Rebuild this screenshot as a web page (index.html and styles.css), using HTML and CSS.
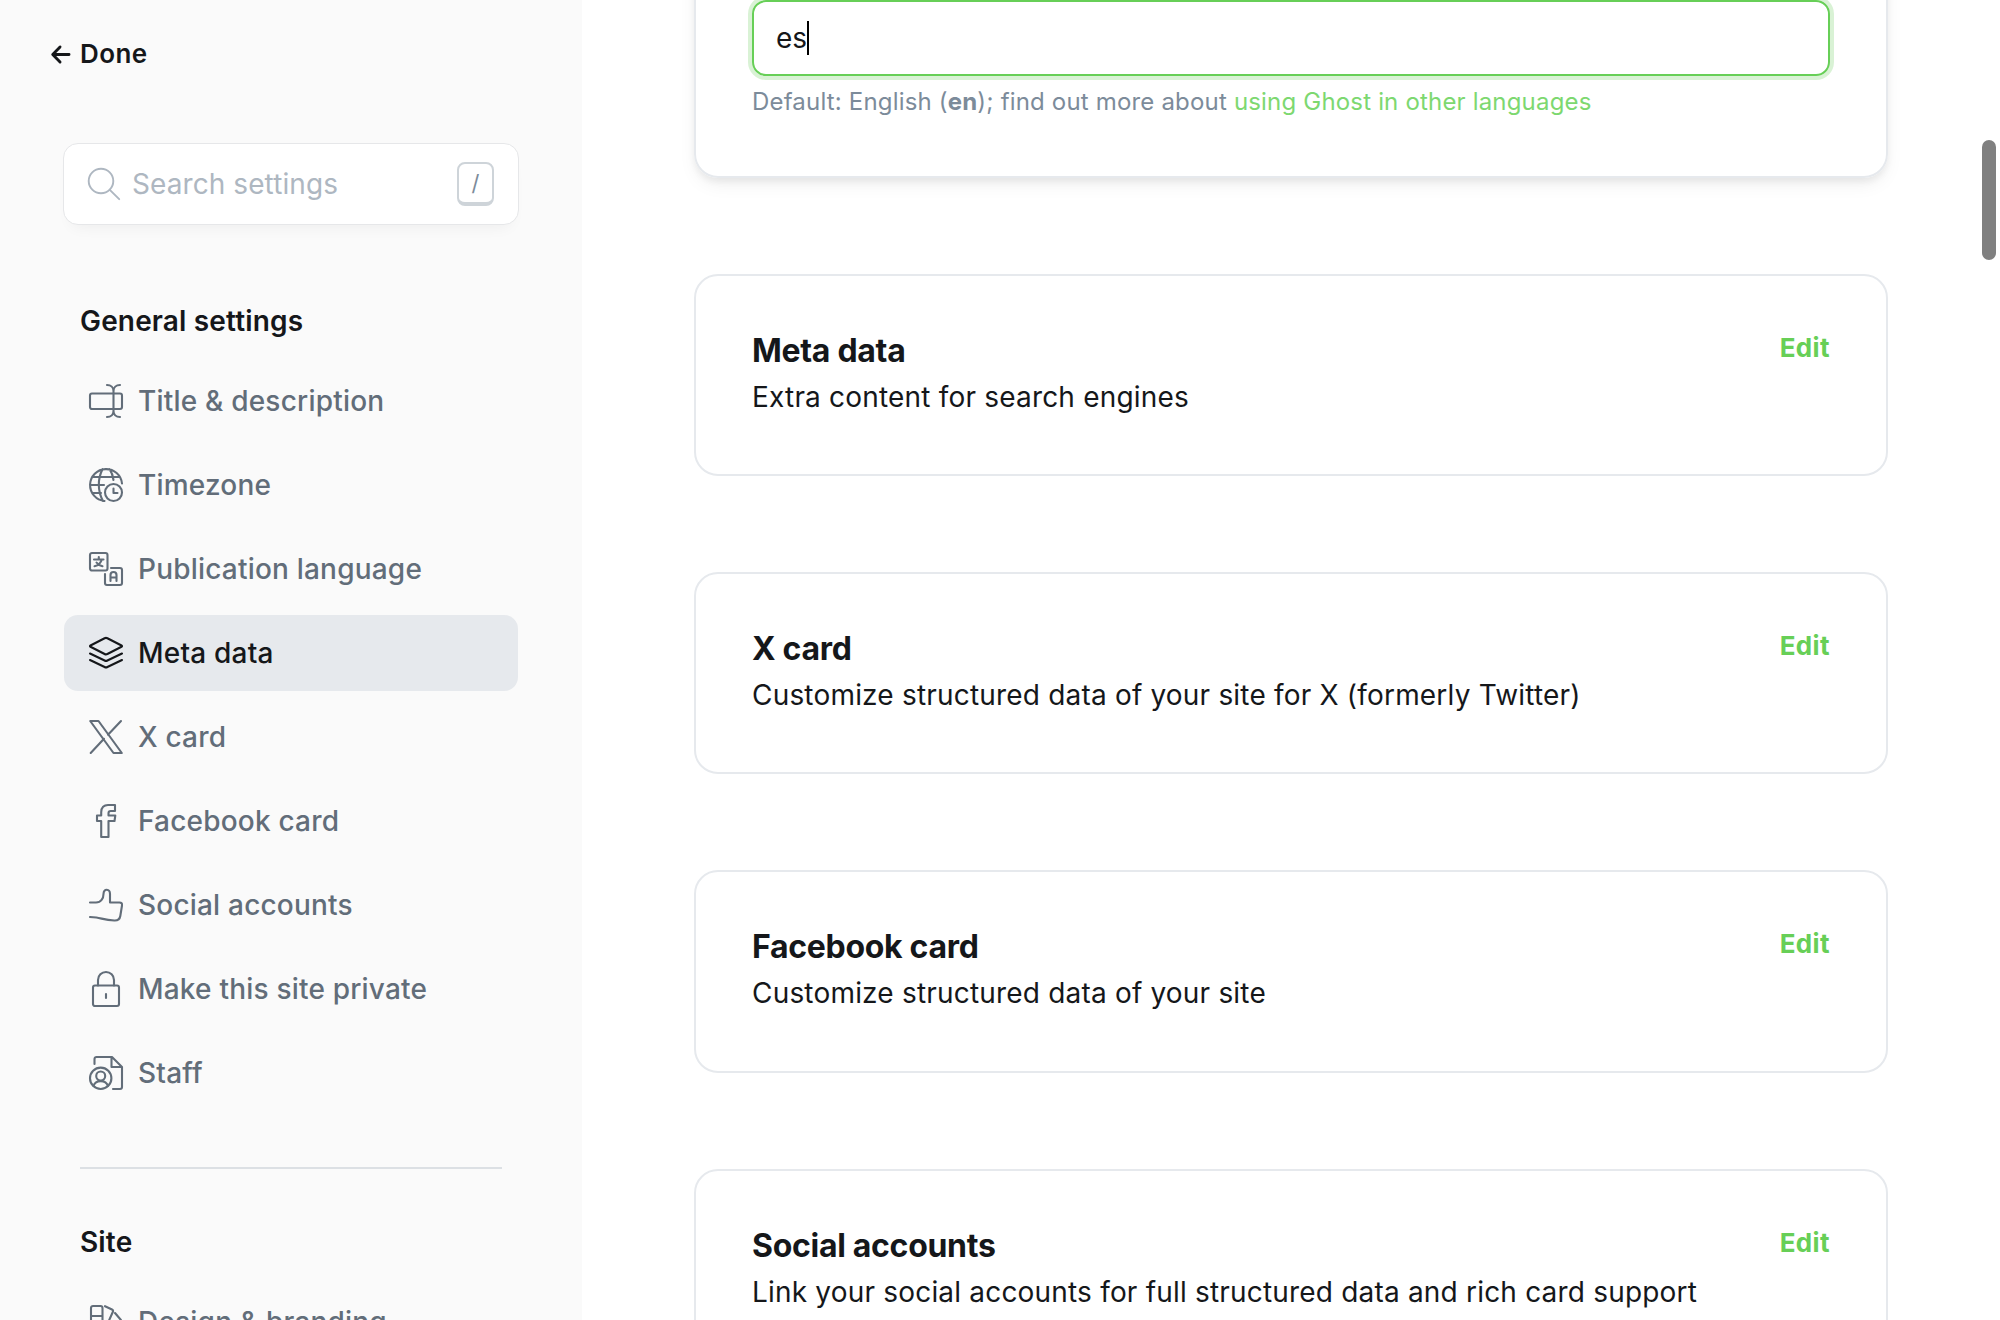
FILE: index.html
```html
<!DOCTYPE html>
<html lang="en">
<head>
<meta charset="utf-8">
<title>Settings</title>
<link rel="stylesheet" href="styles.css">
</head>
<body>
<div class="app">
  <aside class="sidebar">
    <a class="done">
      <svg class="done-icon" viewBox="0 0 20 20"><path d="M19 10H2M9.500 2 1.800 10l7.700 8"/></svg>
      <span>Done</span>
    </a>
    <div class="search">
      <svg class="search-icon" viewBox="0 0 32 32"><circle cx="13" cy="13" r="12.300"/><path d="m21.800 21.800 9.400 9.400"/></svg>
      <span class="search-text">Search settings</span>
      <kbd class="key">/</kbd>
    </div>
    <nav class="nav">
      <h2 class="nav-title">General settings</h2>
      <a class="nav-item">
        <svg class="icon" viewBox="0 0 34 34"><rect x="1" y="9.500" width="32" height="15.500" rx="2"/><path d="M18 1c4 0 6.500 2.500 6.500 6v20c0 3.500-2.500 6-6.500 6M31 1c-4 0-6.500 2.500-6.500 6M24.500 27c0 3.500 2.500 6 6.500 6"/></svg>
        <span>Title &amp; description</span>
      </a>
      <a class="nav-item">
        <svg class="icon" viewBox="0 0 34 34"><path d="M15.500 33A16 16 0 1 1 33 15.500M14 33C8.500 23 8.500 11 13.500 1.200M20.500 1.200C22.500 4 24 8 24.500 12M3.500 9h27M1 17h14M3.500 25H12"/><circle cx="24.500" cy="24.500" r="8.500"/><path d="M24.500 20.500v4.500h4"/></svg>
        <span>Timezone</span>
      </a>
      <a class="nav-item">
        <svg class="icon" viewBox="0 0 34 34"><rect x="1" y="1" width="17.500" height="17.500" rx="2"/><path d="M22 16h9a2 2 0 0 1 2 2v13a2 2 0 0 1-2 2H18a2 2 0 0 1-2-2v-9M5 7.500h9.500M9.800 5v2.500M12.800 7.500c-1 3.700-4 6-7.300 6.800M7.500 10.500c1.200 1.800 3.500 3.200 6 3.800M21.500 29v-6a3 3 0 0 1 6 0v6M21.500 25.500h6"/></svg>
        <span>Publication language</span>
      </a>
      <a class="nav-item nav-item-active">
        <svg class="icon" viewBox="0 0 34 34"><path d="M1.500 9.500 15.600 2.200a3 3 0 0 1 2.800 0L32.500 9.500c.7.400.7.900 0 1.300L18.400 18a3 3 0 0 1-2.800 0L1.500 10.800c-.7-.4-.7-.9 0-1.300ZM1 17.500l14.600 7a3 3 0 0 0 2.800 0l14.600-7M1 24l14.600 7a3 3 0 0 0 2.800 0L33 24"/></svg>
        <span>Meta data</span>
      </a>
      <a class="nav-item">
        <svg class="icon" viewBox="0 0 34 34"><path d="M1.200 1h8.300l23.300 32h-8.300ZM1.700 33l13.300-14.200M32 1 19 14.700"/></svg>
        <span>X card</span>
      </a>
      <a class="nav-item">
        <svg class="icon" viewBox="0 0 34 34"><path d="M12.200 33V17H8v-5.500h4.200V8.200C12.200 3.500 15 1 19 1h7v6h-4.200c-1.500 0-2.300.8-2.300 2.200v2.300h6.800L25.500 17h-6v16Z"/></svg>
        <span>Facebook card</span>
      </a>
      <a class="nav-item">
        <svg class="icon" viewBox="0 0 34 34"><path d="M1 14.500h6c5 0 7.500-4 7.500-8.500 0-6 6.500-5.500 6.500 0v8.500h9.500c2 0 2.800 1 2.500 3l-1.700 10.500c-.6 3.600-2.500 4.700-6 4.500-9-.4-12-2-18-3L1 29"/></svg>
        <span>Social accounts</span>
      </a>
      <a class="nav-item">
        <svg class="icon" viewBox="0 0 34 34"><rect x="4" y="13.500" width="26" height="20.500" rx="2"/><path d="M9 13.500V8a8 8 0 0 1 16 0v5.500M17 22v4"/></svg>
        <span>Make this site private</span>
      </a>
      <a class="nav-item">
        <svg class="icon" viewBox="0 0 34 34"><path d="M5.500 8V3a2 2 0 0 1 2-2H23l10 10v20a2 2 0 0 1-2 2h-7M22.500 1v10H33"/><circle cx="11.700" cy="22.300" r="10.700"/><circle cx="11.700" cy="20" r="4.500"/><path d="M4.500 30c2-6.500 12.400-6.500 14.400 0"/></svg>
        <span>Staff</span>
      </a>
    </nav>
    <nav class="nav nav-site">
      <h2 class="nav-title">Site</h2>
      <a class="nav-item">
        <svg class="icon" viewBox="0 0 34 34"><path d="M2 28V3a2 2 0 0 1 2-2h7.500a2 2 0 0 1 2 2v25a5.700 5.700 0 0 1-11.500 0ZM2 11h11.500M16 1.200l7 3.300c1 .5 1.300 1.300.9 2.300L18 20M26 8l5.500 6.500c.7.800.6 1.800-.2 2.500L18 29"/></svg>
        <span>Design &amp; branding</span>
      </a>
    </nav>
  </aside>
  <main class="content">
    <section class="card card-editing">
      <div class="input"><span>es</span><span class="caret"></span></div>
      <p class="hint">Default: English (<strong>en</strong>); find out more about <a class="link">using Ghost in other languages</a></p>
    </section>
    <section class="card">
      <div><h3 class="card-title">Meta data</h3><p class="card-text">Extra content for search engines</p></div>
      <a class="edit">Edit</a>
    </section>
    <section class="card">
      <div><h3 class="card-title">X card</h3><p class="card-text">Customize structured data of your site for X (formerly Twitter)</p></div>
      <a class="edit">Edit</a>
    </section>
    <section class="card">
      <div><h3 class="card-title">Facebook card</h3><p class="card-text">Customize structured data of your site</p></div>
      <a class="edit">Edit</a>
    </section>
    <section class="card">
      <div><h3 class="card-title">Social accounts</h3><p class="card-text">Link your social accounts for full structured data and rich card support</p></div>
      <a class="edit">Edit</a>
    </section>
  </main>
  <div class="scrollbar"></div>
</div>
</body>
</html>
```
FILE: styles.css
```css
* { box-sizing: border-box; margin: 0; }

body {
  font-family: Inter, "Liberation Sans", sans-serif;
  font-size: 28px;
  font-optical-sizing: none;
  color: #15171a;
  background: #fff;
  overflow: hidden;
}

svg {
  fill: none;
  stroke: currentColor;
  stroke-linecap: round;
  stroke-linejoin: round;
  flex: none;
  overflow: visible;
}

.app {
  position: relative;
  display: flex;
  height: 1320px;
  overflow: hidden;
}

.sidebar {
  flex: none;
  width: 582px;
  padding: 32px 64px 0;
  background: #fafafa;
}

.done {
  display: flex;
  align-items: center;
  gap: 10px;
  height: 42px;
  margin-left: -13px;
  font-size: 26px;
  font-weight: 600;
  letter-spacing: .4px;
}

.done-icon { width: 19px; height: 19px; margin-top: 2px; stroke-width: 3; }

.search {
  display: flex;
  align-items: center;
  width: 456px;
  height: 82px;
  margin: 69px 0 0 -1px;
  padding: 0 24px;
  background: #fff;
  border: 1px solid #e6e7e9;
  border-radius: 15px;
  box-shadow: 0 10px 16px -9px rgba(0, 0, 0, .06);
  color: #aeb7c1;
}

.search-icon { width: 32px; height: 32px; stroke-width: 1.9; }

.search-text { flex: 1; margin-left: 12px; letter-spacing: .08px; }

.key {
  width: 37px;
  height: 44px;
  border: 2px solid #ced4d9;
  border-bottom-width: 4px;
  border-radius: 8px;
  font: 22px/38px Inter, sans-serif;
  text-align: center;
  color: #7c8b9a;
}

.nav { margin-top: 75px; }

.nav-title {
  margin-left: 16px;
  height: 42px;
  font-size: 28px;
  line-height: 42px;
  font-weight: 600;
  letter-spacing: .16px;
}

.nav-item {
  display: flex;
  align-items: center;
  gap: 15px;
  width: 454px;
  height: 76px;
  margin-bottom: 8px;
  padding-left: 25px;
  border-radius: 14px;
  font-weight: 500;
  letter-spacing: .2px;
  color: #626d79;
}

.nav-title + .nav-item { margin-top: 21px; }

.nav-item-active { color: #15171a; background: #e6e9ed; }

.icon { width: 34px; height: 34px; stroke-width: 2.1; }

.nav-site { margin: 56px 0 0; }

.nav-site::before {
  content: "";
  display: block;
  width: 422px;
  margin: 0 0 52px 16px;
  border-top: 2px solid #dce0e4;
}

.content {
  display: flex;
  flex-direction: column;
  gap: 96px;
  width: 1306px;
  padding-left: 112px;
  flex: none;
}

.card {
  display: flex;
  justify-content: space-between;
  flex: none;
  height: 202.4px;
  padding: 54px 56px 0;
  border: 2px solid #e6e9ed;
  border-radius: 24px;
}

.card-editing {
  display: block;
  height: 237.6px;
  margin-top: -60px;
  padding-top: 58px;
  box-shadow: 0 4px 6px rgba(0, 0, 0, .05), 0 8px 20px -4px rgba(0, 0, 0, .08);
}

.input {
  display: flex;
  align-items: center;
  height: 76px;
  padding-left: 22px;
  border: 2px solid #67cf57;
  border-radius: 14px;
  box-shadow: 0 0 0 4px #d9f2d5;
}

.caret { width: 2px; height: 34px; background: #000; }

.hint {
  margin-top: 7px;
  font-size: 24px;
  line-height: 38px;
  letter-spacing: .18px;
  color: #7c8b9a;
}

.hint strong { font-weight: 700; }

.link { color: #7dd870; }

.card-title {
  font-size: 32px;
  line-height: 42px;
  font-weight: 700;
  letter-spacing: -.3px;
}

.card-text { margin-top: 4px; line-height: 42px; letter-spacing: .19px; }

.edit {
  height: 34px;
  margin-top: 1px;
  line-height: 34px;
  font-size: 26px;
  font-weight: 700;
  letter-spacing: .4px;
  color: #67cf57;
}

.scrollbar {
  position: absolute;
  left: 1982px;
  top: 140px;
  width: 14px;
  height: 120px;
  border-radius: 7px;
  background: #808080;
}
```
